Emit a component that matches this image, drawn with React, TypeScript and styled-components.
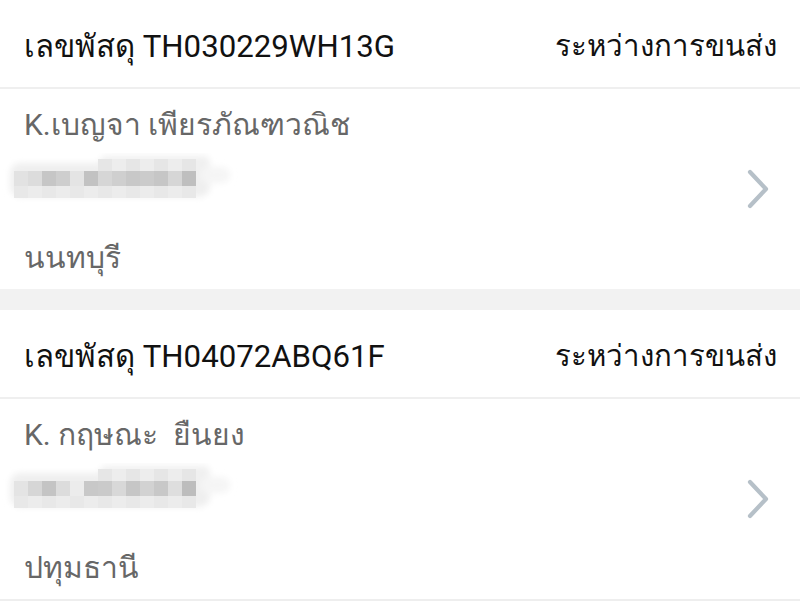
import React from "react";
import styled, { createGlobalStyle } from "styled-components";

const Global = createGlobalStyle`
  html, body { margin: 0; padding: 0; background: #ffffff; }
  body { font-family: Roboto, "Noto Sans", "DejaVu Sans", sans-serif; }
`;

const Page = styled.div`
  display: flex;
  flex-direction: column;
  width: 800px;
  background: #f2f2f2;
  gap: 21px;
`;

const Card = styled.div<{ $last?: boolean }>`
  display: flex;
  flex-direction: column;
  background: #ffffff;
  border-bottom: ${(p) => (p.$last ? "2px solid #eeeeee" : "none")};
`;

const Header = styled.div`
  height: 89px;
  display: flex;
  align-items: center;
  justify-content: space-between;
  padding: 4px 23px 0 24px;
  box-sizing: border-box;
  border-bottom: 2px solid #efefef;
  font-size: 31.2px;
  color: #111111;
`;

const Status = styled.span`
  font-size: 29.4px;
`;

const Body = styled.div`
  position: relative;
  height: 200px;
  box-sizing: border-box;
  padding: 14px 24px 9px 24px;
  display: flex;
  flex-direction: column;
`;

const Line = styled.div<{ $gapAfter?: number }>`
  height: 44px;
  line-height: 44px;
  font-size: 30px;
  color: #676767;
  margin-bottom: ${(p) => p.$gapAfter ?? 0}px;
  white-space: pre;
`;

const BlurRow = styled.div`
  height: 44px;
  margin: 0 0 36px -24px;
  display: flex;
  align-items: center;
`;

const Chevron = styled.svg`
  position: absolute;
  right: 30px;
  top: 80px;
`;

const cellsA = [
  "#e2e2e2", "#dcdcdc", "#c6c6c6", "#cecece", "#e4e4e4", "#c2c2c2", "#d6d6d6",
  "#cfcfcf", "#c8c8c8", "#cbcbcb", "#c6c6c6", "#d6d6d6", "#bfbfbf",
];
const cellsB = [
  "#e4e4e4", "#d6d6d6", "#c4c4c4", "#dcdcdc", "#ececec", "#c8c8c8", "#cacaca",
  "#d8d8d8", "#c6c6c6", "#d2d2d2", "#c8c8c8", "#dedede", "#bdbdbd",
];

function Blur({ variant }: { variant: number }) {
  const row = variant === 0 ? cellsA : cellsB;
  return (
    <svg width="240" height="50" viewBox="0 0 240 50">
      <defs>
        <filter id={`bl${variant}`} x="-20%" y="-50%" width="140%" height="200%">
          <feGaussianBlur stdDeviation="3" />
        </filter>
      </defs>
      <g filter={`url(#bl${variant})`}>
        <rect x="10" y="10" width="200" height="34" rx="10" fill="#efefef" />
        <rect x="100" y="3" width="110" height="14" rx="6" fill="#f0f0f0" />
        <rect x="200" y="14" width="30" height="16" rx="8" fill="#f5f5f5" />
      </g>
      {row.map((c, i) => (
        <rect key={i} x={14 + i * 14} y={18} width={14} height={15} fill={c} />
      ))}
      {row.map((c, i) => (
        <rect key={"b" + i} x={14 + i * 14} y={33} width={14} height={12} fill={i % 2 ? "#ececec" : "#e8e8e8"} />
      ))}
      {row.slice(6).map((c, i) => (
        <rect key={"t" + i} x={98 + i * 14} y={6} width={14} height={12} fill={i % 2 ? "#ededed" : "#e6e6e6"} />
      ))}
    </svg>
  );
}

type Parcel = { id: string; name: string; city: string };

const parcels: Parcel[] = [
  { id: "TH030229WH13G", name: "K.เบญจา เพียรภัณฑวณิช", city: "นนทบุรี" },
  { id: "TH04072ABQ61F", name: "K. กฤษณะ  ยืนยง", city: "ปทุมธานี" },
];

export default function App() {
  return (
    <>
      <Global />
      <Page>
        {parcels.map((p, i) => (
          <Card key={p.id} $last={i === parcels.length - 1}>
            <Header>
              <span>เลขพัสดุ {p.id}</span>
              <Status>ระหว่างการขนส่ง</Status>
            </Header>
            <Body>
              <Line $gapAfter={9}>{p.name}</Line>
              <BlurRow>
                <Blur variant={i} />
              </BlurRow>
              <Line>{p.city}</Line>
              <Chevron width="24" height="40" viewBox="0 0 24 40">
                <path d="M4 3 L20 20 L4 37" fill="none" stroke="#b6c0c8" strokeWidth="4.2" strokeLinecap="round" strokeLinejoin="round" />
              </Chevron>
            </Body>
          </Card>
        ))}
      </Page>
    </>
  );
}
